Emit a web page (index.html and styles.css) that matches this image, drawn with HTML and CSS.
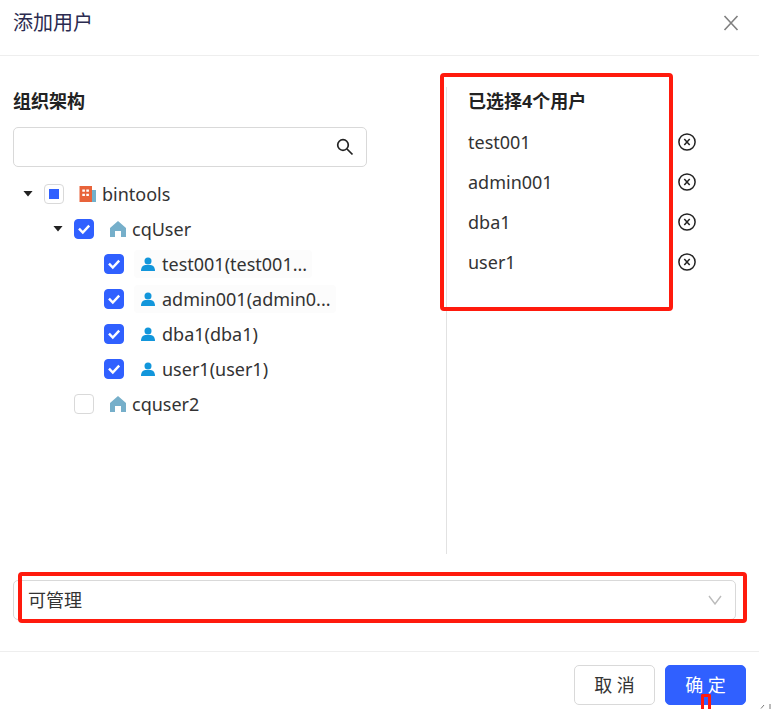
FILE: index.html
```html
<!DOCTYPE html>
<html lang="zh-CN">
<head>
  <meta charset="UTF-8">
  <meta name="viewport" content="width=device-width, initial-scale=1.0">
  <title>添加用户</title>
  <link rel="stylesheet" href="styles.css">
</head>
<body>
  <svg class="sprite" aria-hidden="true">
    <symbol id="icon-org" viewBox="0 0 18 18">
      <path fill="#71b0cb" d="M13 5h4v12h-4z"/>
      <path fill="#e8633a" d="M.5 1H13v16H.5z"/>
      <path fill="#fff" d="M3.3 4.5h2.6v2.2H3.3zM7.3 4.5h2.6v2.2H7.3zM3.3 8.8h2.6V11H3.3zM7.3 8.8h2.6V11H7.3z"/>
    </symbol>
    <symbol id="icon-home" viewBox="0 0 18 18">
      <path fill="#76afca" d="M9 1 17 8v9h-5v-6H6v6H1V8z"/>
    </symbol>
    <symbol id="icon-user" viewBox="0 0 18 18">
      <circle cx="9" cy="6" r="3.5" fill="#1296db"/>
      <path fill="#1296db" d="M2 16c0-4 2-6 5-6h4c3 0 5 2 5 6z"/>
    </symbol>
    <symbol id="icon-remove" viewBox="0 0 18 18">
      <g fill="none" stroke="#222" stroke-width="1.5">
        <circle cx="9" cy="9" r="8.1"/>
        <path d="M6.3 6 11.7 12M11.7 6 6.3 12"/>
      </g>
    </symbol>
  </svg>

  <div class="dialog">
    <header class="dialog-header">
      <h1>添加用户</h1>
      <button class="close" type="button" aria-label="关闭">
        <svg width="16" height="18" viewBox="0 0 16 18"><path d="M1.5 2 14.5 16M14.5 2 1.5 16" fill="none" stroke="#808080" stroke-width="1.6"/></svg>
      </button>
    </header>

    <main class="dialog-body">
      <div class="columns">
        <section class="org">
          <h2>组织架构</h2>
          <div class="search">
            <input type="text" aria-label="搜索用户">
            <button type="button" aria-label="搜索">
              <svg width="18" height="18" viewBox="0 0 18 18"><g fill="none" stroke="#222" stroke-width="1.7"><circle cx="7" cy="7" r="5.3"/><path d="M11 11 16.5 16.5"/></g></svg>
            </button>
          </div>

          <ul class="tree">
            <li class="node">
              <button class="caret" type="button" aria-label="收起"></button>
              <input class="partial" type="checkbox" id="n1">
              <label for="n1"><svg><use href="#icon-org"/></svg>bintools</label>
            </li>
            <li class="node level-2">
              <button class="caret" type="button" aria-label="收起"></button>
              <input type="checkbox" id="n2" checked>
              <label for="n2"><svg><use href="#icon-home"/></svg>cqUser</label>
            </li>
            <li class="node level-3">
              <input type="checkbox" id="n3" checked>
              <label class="shaded" for="n3"><svg><use href="#icon-user"/></svg>test001(test001...</label>
            </li>
            <li class="node level-3">
              <input type="checkbox" id="n4" checked>
              <label class="shaded" for="n4"><svg><use href="#icon-user"/></svg>admin001(admin0...</label>
            </li>
            <li class="node level-3">
              <input type="checkbox" id="n5" checked>
              <label for="n5"><svg><use href="#icon-user"/></svg>dba1(dba1)</label>
            </li>
            <li class="node level-3">
              <input type="checkbox" id="n6" checked>
              <label for="n6"><svg><use href="#icon-user"/></svg>user1(user1)</label>
            </li>
            <li class="node leaf-2">
              <input type="checkbox" id="n7">
              <label for="n7"><svg><use href="#icon-home"/></svg>cquser2</label>
            </li>
          </ul>
        </section>

        <section class="selected">
          <h2>已选择4个用户</h2>
          <ul>
            <li>test001 <button type="button" aria-label="移除 test001"><svg><use href="#icon-remove"/></svg></button></li>
            <li>admin001 <button type="button" aria-label="移除 admin001"><svg><use href="#icon-remove"/></svg></button></li>
            <li>dba1 <button type="button" aria-label="移除 dba1"><svg><use href="#icon-remove"/></svg></button></li>
            <li>user1 <button type="button" aria-label="移除 user1"><svg><use href="#icon-remove"/></svg></button></li>
          </ul>
          <div class="mark mark-selected"></div>
        </section>
      </div>

      <div class="permission">
        <select aria-label="权限">
          <option>可管理</option>
        </select>
        <svg width="14" height="10" viewBox="0 0 14 10"><path d="M1 1 7 9 13 1" fill="none" stroke="#bbb" stroke-width="1.4"/></svg>
        <div class="mark mark-permission"></div>
      </div>
    </main>

    <footer class="dialog-footer">
      <button class="btn" type="button">取 消</button>
      <button class="btn primary" type="button">确 定<span class="mark mark-ok"></span></button>
    </footer>
  </div>
  <svg class="return-mark" width="11" height="5" viewBox="0 0 11 5" aria-hidden="true"><path d="M4 1 1 4.5M10 0V5" fill="none" stroke="#777"/></svg>
</body>
</html>
```
FILE: styles.css
```css
* {
  box-sizing: border-box;
}
body {
  margin: 0;
  background: #fff;
  color: #333;
  font-family: "Noto Sans", "Noto Sans CJK SC", sans-serif;
  font-size: 18px;
  line-height: 28px;
}
h1, h2, ul {
  margin: 0;
  padding: 0;
}
ul {
  list-style: none;
}
button {
  padding: 0;
  border: 0;
  background: none;
  font: inherit;
  color: inherit;
  cursor: pointer;
}
svg {
  display: block;
  flex: none;
}
.sprite {
  position: absolute;
  width: 0;
  height: 0;
}
.dialog {
  display: flex;
  flex-direction: column;
  min-height: 100vh;
  margin-right: 12px;
}

/* header */
.dialog-header {
  display: flex;
  align-items: center;
  justify-content: space-between;
  padding: 7px 20px 16px 13px;
  border-bottom: 1px solid #eee;
}
.dialog-header h1 {
  font-size: 20px;
  line-height: 32px;
  font-weight: 400;
  color: #2b2b50;
}

/* body */
.dialog-body {
  display: flex;
  flex: 1;
  flex-direction: column;
  padding: 31px 13px;
}
.columns {
  display: grid;
  flex: 1;
  grid-template-columns: 433fr 300fr;
  margin-bottom: 26px;
}
h2 {
  font-size: 18px;
  line-height: 28px;
  color: #222;
}
.org {
  padding-right: 79px;
}
.search {
  display: flex;
  align-items: center;
  height: 40px;
  margin: 12px 0 9px;
  padding-right: 12px;
  border: 1px solid #d9d9d9;
  border-radius: 5px;
}
.search input {
  flex: 1;
  min-width: 0;
  height: 100%;
  padding: 0 14px;
  border: 0;
  outline: 0;
  background: none;
  font: inherit;
}

/* tree */
.node {
  display: flex;
  align-items: center;
  height: 35px;
  padding-left: 10px;
}
.level-2 {
  padding-left: 40px;
}
.leaf-2 {
  padding-left: 61px;
}
.level-3 {
  padding-left: 91px;
}
.caret {
  width: 10px;
  height: 6px;
  margin-right: 11px;
  background: #222;
  clip-path: polygon(0 0, 100% 0, 50% 100%);
}
.node input {
  display: grid;
  place-items: center;
  appearance: none;
  flex: none;
  width: 20px;
  height: 20px;
  margin: 0 10px 0 0;
  border: 1px solid #d9d9d9;
  border-radius: 4px;
}
.node input:checked {
  border-color: #3060ff;
  background: #3060ff url("data:image/svg+xml,%3Csvg xmlns='http://www.w3.org/2000/svg' viewBox='0 0 18 18'%3E%3Cpath d='M4 8.6 7.8 12.6 14.2 5.6' fill='none' stroke='%23fff' stroke-width='2.4'/%3E%3C/svg%3E") center / 18px no-repeat;
}
.node .partial::after {
  content: "";
  width: 10px;
  height: 10px;
  background: #3060ff;
}
.node label {
  display: flex;
  align-items: center;
  gap: 5px;
  padding: 0 5px;
  border-radius: 4px;
  white-space: nowrap;
}
.node label svg {
  width: 18px;
  height: 18px;
}
.node .shaded {
  background: #fcfcfc;
}

/* selected users */
.selected {
  position: relative;
  padding: 0 50px 0 21px;
  border-left: 1px solid #e2e2e2;
}
.selected ul {
  padding-top: 7px;
}
.selected li {
  display: flex;
  align-items: center;
  justify-content: space-between;
  height: 40px;
}
.selected li svg {
  width: 18px;
  height: 18px;
}

/* permission */
.permission {
  position: relative;
  display: grid;
  align-items: center;
  margin-right: 10px;
}
.permission select {
  grid-area: 1 / 1;
  appearance: none;
  height: 40px;
  padding: 0 14px;
  border: 1px solid #d9d9d9;
  border-radius: 5px;
  background: #fff;
  color: #333;
  font: inherit;
}
.permission svg {
  grid-area: 1 / 1;
  justify-self: end;
  margin-right: 14px;
  pointer-events: none;
}

/* footer */
.dialog-footer {
  display: flex;
  justify-content: flex-end;
  gap: 10px;
  padding: 13px 13px 4px;
  border-top: 1px solid #eee;
}
.btn {
  position: relative;
  width: 81px;
  height: 40px;
  border: 1px solid #d9d9d9;
  border-radius: 5px;
}
.btn.primary {
  border-color: #3060ff;
  background: #3060ff;
  color: #fff;
}

/* red callouts */
.mark {
  position: absolute;
  border: 4px solid #ff1a0d;
  border-radius: 4px;
  pointer-events: none;
}
.mark-selected {
  top: -14px;
  left: -7px;
  right: 73px;
  height: 238px;
}
.mark-permission {
  inset: -8px -11px -3px 5px;
}
.mark-ok {
  top: 28px;
  left: 35px;
  width: 10px;
  height: 15px;
  border-width: 3px 3px 0;
  border-radius: 2px 2px 0 0;
}
.return-mark {
  position: fixed;
  right: 0;
  bottom: 0;
}
```
